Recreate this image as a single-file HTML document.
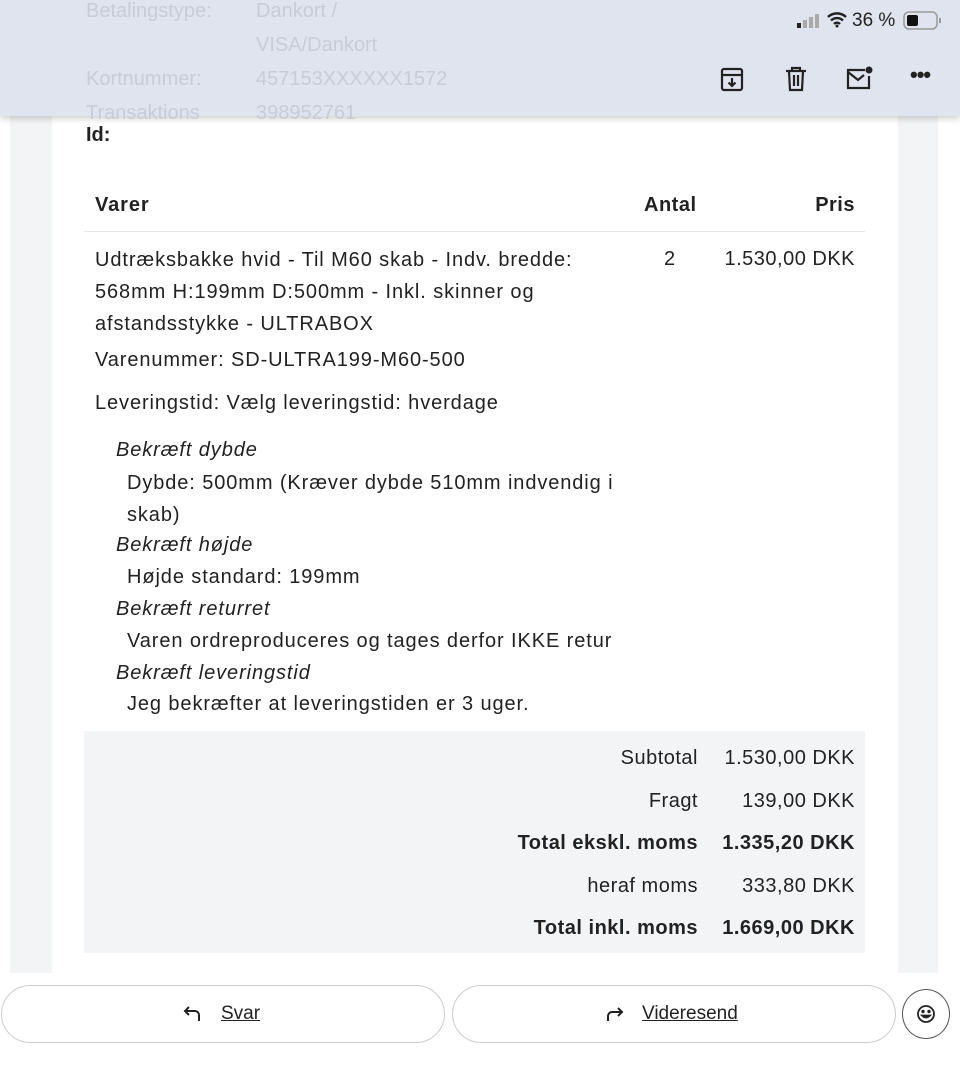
<!DOCTYPE html>
<html><head><meta charset="utf-8"><style>
*{margin:0;padding:0;box-sizing:border-box}
body{width:960px;height:1087px;background:#fff;position:relative;overflow:hidden;font-family:"Liberation Sans",sans-serif;color:#222;font-size:20px}
.abs{position:absolute;white-space:nowrap}
.r{text-align:right}
.b{font-weight:bold}
.i{font-style:italic}
.w{letter-spacing:0.9px}
.n{letter-spacing:0.5px}
</style></head><body>
<div class="abs" style="left:10px;top:0;width:928px;height:973px;background:#f3f4f6"></div>
<div class="abs" style="left:52px;top:0;width:846px;height:973px;background:#fff"></div>
<div class="abs" style="left:0;top:0;width:960px;height:116px;background:#dfe4ef;box-shadow:0 3px 6px rgba(0,0,0,.18)"></div>
<div class="abs" style="left:86px;top:-6px;color:#c7ccd6;line-height:34px">Betalingstype:<br><br>Kortnummer:<br>Transaktions</div>
<div class="abs" style="left:256px;top:-6px;color:#c7ccd6;line-height:34px">Dankort /<br>VISA/Dankort<br>457153XXXXXX1572<br>398952761</div>
<svg class="abs" style="left:797px;top:13px" width="26" height="16"><rect x="0" y="10" width="4" height="5" fill="#222"/><rect x="6" y="7" width="4" height="8" fill="#aaa"/><rect x="12" y="4" width="4" height="11" fill="#aaa"/><rect x="18" y="1" width="4" height="14" fill="#aaa"/></svg>
<svg class="abs" style="left:827px;top:12px" width="20" height="16"><path d="M1 5a13 13 0 0 1 18 0M4 8.5a8.5 8.5 0 0 1 12 0M7 12a4 4 0 0 1 6 0" stroke="#222" stroke-width="2.4" fill="none"/><circle cx="10" cy="14" r="1.5" fill="#222"/></svg>
<div class="abs" style="left:852px;top:10px;font-size:19px">36 %</div>
<svg class="abs" style="left:903px;top:11px" width="40" height="20"><rect x="1" y="1" width="33" height="17" rx="5" fill="none" stroke="#999" stroke-width="1.5"/><rect x="4" y="4" width="11" height="11" rx="2" fill="#111"/><rect x="36" y="7" width="2" height="5" fill="#999"/></svg>
<svg class="abs" style="left:718px;top:66px" width="28" height="28" fill="none" stroke="#222" stroke-width="2.2"><rect x="4" y="3" width="20" height="21" rx="2"/><path d="M4 9h20M14 12v8M10.5 16.5l3.5 3.5 3.5-3.5"/></svg>
<svg class="abs" style="left:782px;top:65px" width="28" height="28" fill="none" stroke="#222" stroke-width="2.2"><path d="M4 6h20M10 6V3h8v3M7 6l1 19h12l1-19M12 10v11M16 10v11"/></svg>
<svg class="abs" style="left:845px;top:64px" width="30" height="28" fill="none" stroke="#222" stroke-width="2.2"><path d="M20 6H3v18h21V12"/><path d="M3 8l10 8 6-5"/><circle cx="24" cy="6" r="3.5" fill="#222" stroke="none"/></svg>
<div class="abs" style="left:910px;top:62px;font-size:22px;font-weight:bold;letter-spacing:-1px">•••</div>

<div class="abs b" style="left:86px;top:124px">Id:</div>
<div class="abs b w" style="left:95px;top:194px">Varer</div>
<div class="abs b n" style="left:644px;top:194px">Antal</div>
<div class="abs b r n" style="left:760px;top:194px;width:95px">Pris</div>
<div class="abs" style="left:84px;top:231px;width:781px;height:1px;background:#e8e8e8"></div>
<div class="abs w" style="left:95px;top:244px;line-height:32px">Udtræksbakke hvid - Til M60 skab - Indv. bredde:<br>568mm H:199mm D:500mm - Inkl. skinner og<br>afstandsstykke - ULTRABOX</div>
<div class="abs" style="left:664px;top:248px">2</div>
<div class="abs r n" style="left:690px;top:248px;width:165px">1.530,00 DKK</div>
<div class="abs w" style="left:95px;top:349px">Varenummer: SD-ULTRA199-M60-500</div>
<div class="abs w" style="left:95px;top:392px">Leveringstid: Vælg leveringstid: hverdage</div>
<div class="abs i w" style="left:116px;top:439px">Bekræft dybde</div>
<div class="abs w" style="left:127px;top:467px;line-height:32px">Dybde: 500mm (Kræver dybde 510mm indvendig i<br>skab)</div>
<div class="abs i w" style="left:116px;top:534px">Bekræft højde</div>
<div class="abs w" style="left:127px;top:566px">Højde standard: 199mm</div>
<div class="abs i w" style="left:116px;top:598px">Bekræft returret</div>
<div class="abs w" style="left:127px;top:630px">Varen ordreproduceres og tages derfor IKKE retur</div>
<div class="abs i w" style="left:116px;top:662px">Bekræft leveringstid</div>
<div class="abs w" style="left:127px;top:693px">Jeg bekræfter at leveringstiden er 3 uger.</div>
<div class="abs" style="left:84px;top:731px;width:781px;height:222px;background:#f3f4f6"></div>
<div class="abs r n" style="left:400px;top:737px;width:298px;line-height:42.5px">Subtotal<br>Fragt<br><b>Total ekskl. moms</b><br>heraf moms<br><b>Total inkl. moms</b></div>
<div class="abs r n" style="left:690px;top:737px;width:165px;line-height:42.5px">1.530,00 DKK<br>139,00 DKK<br><b>1.335,20 DKK</b><br>333,80 DKK<br><b>1.669,00 DKK</b></div>
<div class="abs" style="left:1px;top:985px;width:444px;height:58px;border:1px solid #ccc;border-radius:29px"></div>
<div class="abs" style="left:452px;top:985px;width:444px;height:58px;border:1px solid #ccc;border-radius:29px"></div>
<div class="abs" style="left:902px;top:989px;width:48px;height:50px;border:1.5px solid #555;border-radius:50%"></div>
<svg class="abs" style="left:915px;top:1003px" width="22" height="22" fill="none" stroke="#222" stroke-width="1.8"><circle cx="11" cy="11" r="8"/><path d="M7 12.5q4 4 8 0z" fill="#222"/><circle cx="8" cy="8.5" r=".8" fill="#222"/><circle cx="14" cy="8.5" r=".8" fill="#222"/></svg>
<svg class="abs" style="left:183px;top:1004px" width="20" height="20" fill="none" stroke="#222" stroke-width="2"><path d="M6 3L2 7l4 4M2 7h10a4 4 0 0 1 4 4v6"/></svg>
<div class="abs" style="left:221px;top:1003px;font-size:19px;text-decoration:underline">Svar</div>
<svg class="abs" style="left:604px;top:1004px" width="20" height="20" fill="none" stroke="#222" stroke-width="2"><path d="M14 4l4 4-4 4M18 8H8a4 4 0 0 0-4 4v5"/></svg>
<div class="abs" style="left:642px;top:1003px;font-size:19px;text-decoration:underline">Videresend</div>
</body></html>
